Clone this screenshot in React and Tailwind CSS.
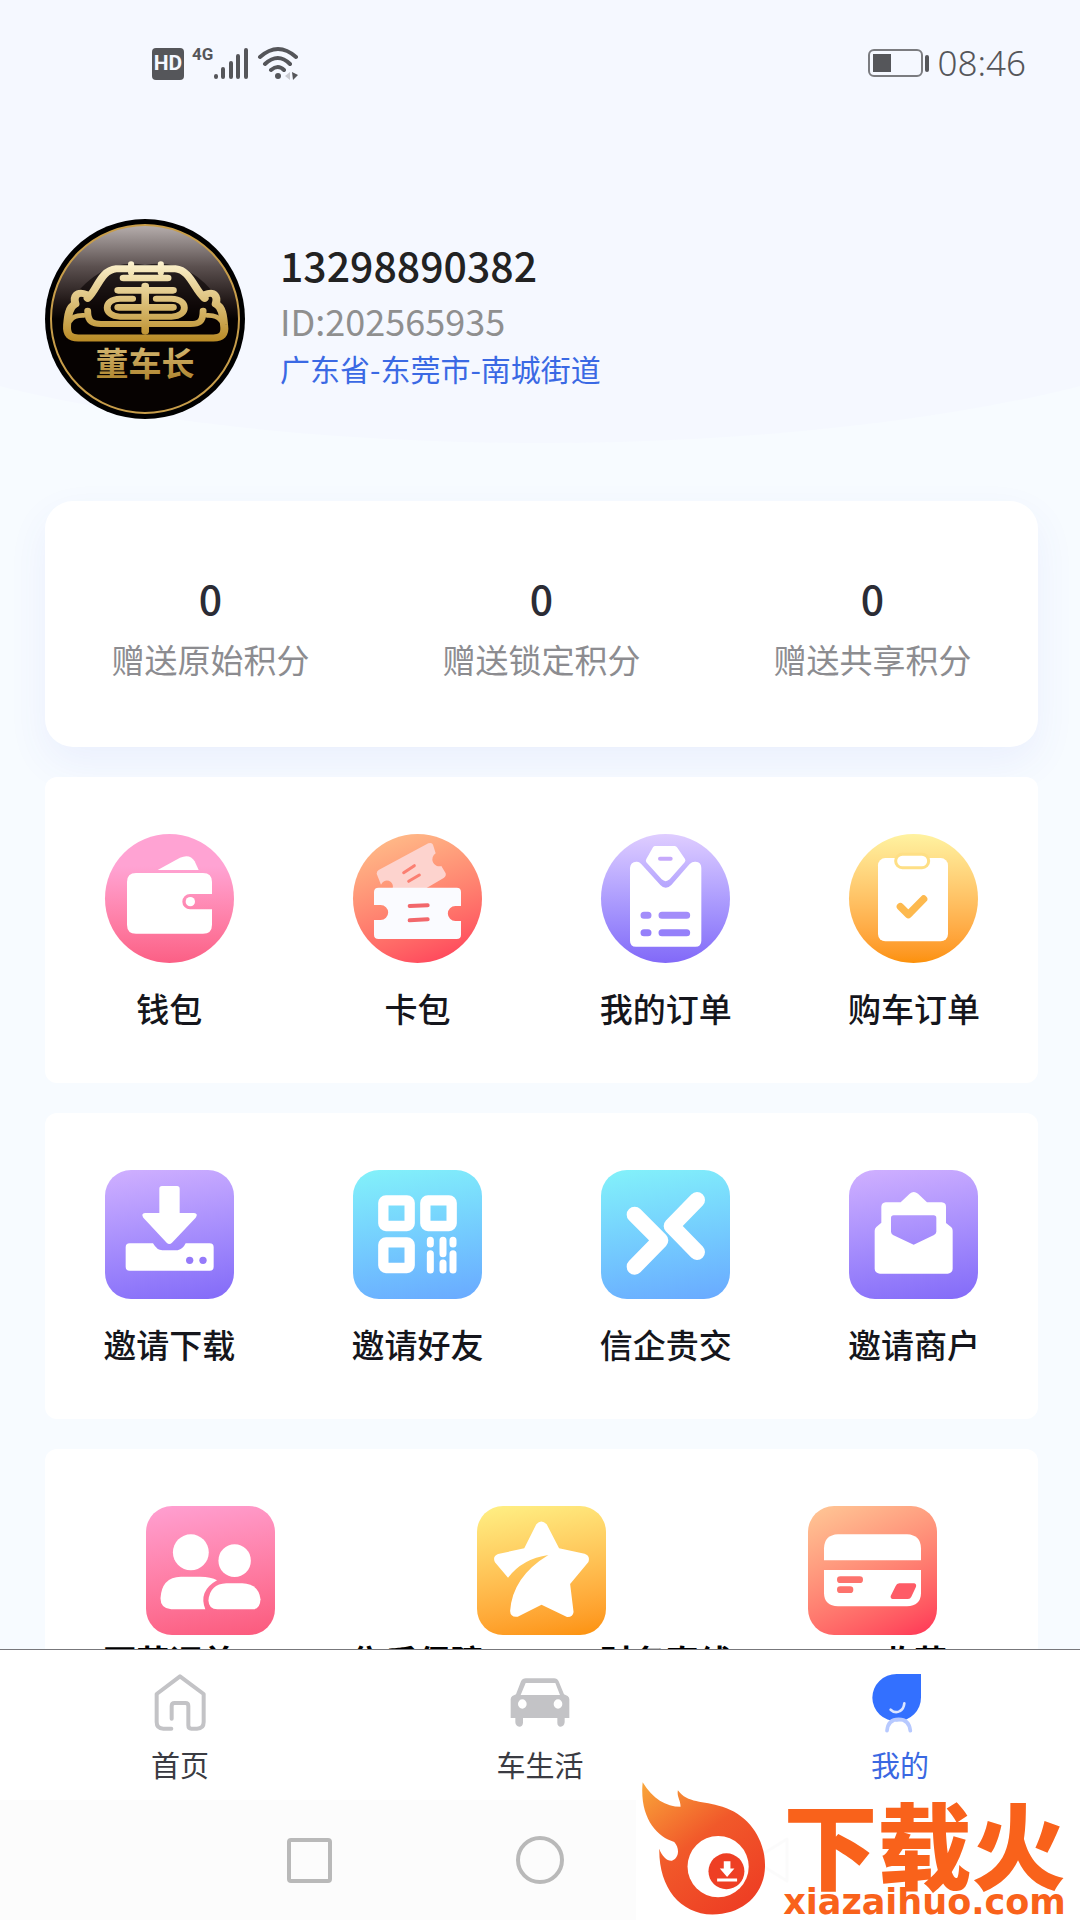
import { useState } from "react";

const WalletIcon = () => (
  <svg viewBox="75 72 387 387" className="size-full" fill="#fff">
    <path d="M233 180L300 143Q330 130 344 154L356 180Z" />
    <path d="M168 189H369Q396 189 396 216V252H330A22 22 0 0 0 330 298H396V344Q396 371 369 371H168Q141 371 141 344V216Q141 189 168 189Z" />
    <circle cx="331" cy="275" r="14" />
  </svg>
);

const CouponIcon = () => (
  <svg viewBox="813 72 387 387" className="size-full">
    <path
      d="M890 180L1039 100Q1050 96 1053 104L1061 130A21 21 0 0 0 1078 168L1091 190Q1093 199 1085 204L1030 236H932A18 18 0 0 0 897 224L884 191Q884 184 890 180Z"
      fill="#fdd3ce"
    />
    <path d="M965 188L997 167M980 214L1012 195" stroke="#fb7f72" strokeWidth="9" strokeLinecap="round" />
    <path
      d="M890 233H1124Q1137 233 1137 246V288H1120A22 22 0 0 0 1120 333H1137V374Q1137 387 1124 387H890Q876 387 876 374V330H896A22 22 0 0 0 896 285H876V246Q876 233 890 233Z"
      fill="#fafbff"
    />
    <path d="M983 288L1037 286M983 331L1037 328" stroke="#f2676b" strokeWidth="12" strokeLinecap="round" />
  </svg>
);

const OrderIcon = () => (
  <svg viewBox="120 72 387 387" className="size-full">
    <path d="M282 108H341Q346 108 349 113L372 147Q375 152 371 157L326 208Q314 219 302 208L256 157Q253 152 256 147L276 112Q279 108 282 108Z" fill="#fff" />
    <path d="M226 155Q234 154 240 161L298 225Q314 242 331 225L386 162Q394 154 404 155Q421 156 421 174V392Q421 410 403 410H225Q207 410 207 392V174Q208 156 226 155Z" fill="#fff" />
    <path d="M297 146H329" stroke="#c6a9fb" strokeWidth="12" strokeLinecap="round" />
    <path d="M249 316H261M303 316H377" stroke="#a38dfa" strokeWidth="21" strokeLinecap="round" />
    <path d="M249 368H261M303 368H377" stroke="#9580fa" strokeWidth="21" strokeLinecap="round" />
  </svg>
);

const CarOrderIcon = () => (
  <svg viewBox="867 72 387 387" className="size-full">
    <rect x="954" y="144" width="210" height="250" rx="22" fill="#fff" />
    <rect x="1007" y="133" width="99" height="40" rx="20" fill="#fff" stroke="#fedf85" strokeWidth="9" />
    <path d="M1021 290L1045 314L1091 267" fill="none" stroke="#fdb94e" strokeWidth="22" strokeLinecap="round" strokeLinejoin="round" />
  </svg>
);

const DownloadIcon = () => (
  <svg viewBox="75 60 387 387" className="size-full" fill="#fff">
    <path d="M246 108H291Q299 108 299 116V189H342Q356 191 347 203L276 278Q268 286 260 278L190 203Q182 191 195 189H238V116Q238 108 246 108Z" />
    <path d="M149 280H219Q231 301 247 301H293Q309 297 317 280H389Q401 280 401 292V350Q401 362 389 362H149Q137 362 137 350V292Q137 280 149 280Z" />
    <circle cx="329" cy="331" r="11" fill="#957afa" />
    <circle cx="369" cy="331" r="11" fill="#957afa" />
  </svg>
);

const QrIcon = () => (
  <svg viewBox="822 60 387 387" className="size-full" fill="none" stroke="#fff">
    <rect x="913" y="151" width="79" height="77" rx="8" strokeWidth="31" />
    <rect x="1039" y="151" width="79" height="77" rx="8" strokeWidth="31" />
    <rect x="913" y="277" width="79" height="77" rx="8" strokeWidth="31" />
    <path
      d="M1054 271V282M1054 311V360M1092 271V311M1092 339V360M1122 271V282M1122 311V360"
      strokeWidth="21"
      strokeLinecap="round"
    />
  </svg>
);

const ExchangeIcon = () => (
  <svg viewBox="120 60 387 387" className="size-full" fill="none" stroke="#fff" strokeWidth="48" strokeLinecap="round" strokeLinejoin="round">
    <path d="M221 194L298 271L221 350" />
    <path d="M408 150L332 228L408 306" />
  </svg>
);

const MerchantIcon = () => (
  <svg viewBox="867 60 387 387" className="size-full" fill="#fff">
    <path
      fillRule="evenodd"
      d="M1049 131Q1061 121 1074 131L1101 157H1145Q1158 158 1158 170V219L1174 232Q1178 236 1178 242V356Q1177 370 1163 371H960Q945 370 944 356V242Q944 236 949 231L964 218V170Q965 158 977 157H1022ZM1001 196Q993 196 993 204V245Q993 251 999 255L1061 284L1122 255Q1129 251 1129 245V204Q1129 196 1121 196Z"
    />
  </svg>
);

const FriendsIcon = () => (
  <svg viewBox="195 78 374 387" preserveAspectRatio="none" className="size-full" fill="#fff">
    <ellipse cx="325" cy="217" rx="52" ry="54" />
    <ellipse cx="452" cy="242" rx="47" ry="49" />
    <path d="M296 290H352Q384 290 401 301Q346 333 367 388H268Q237 386 237 355Q240 292 296 290Z" />
    <path d="M428 310H474Q522 312 527 358Q526 387 505 388H402Q377 387 376 362Q380 312 428 310Z" />
  </svg>
);

const StarIcon = () => (
  <svg viewBox="1153 78 374 387" preserveAspectRatio="none" className="size-full" fill="#fff">
    <path d="M1325 133Q1339 116 1355 133L1391 205L1465 221Q1482 227 1476 246L1423 312L1433 396Q1431 412 1414 411L1340 374L1271 410Q1250 413 1249 393Q1256 290 1360 225Q1285 236 1243 293L1205 247Q1197 229 1214 222L1290 205Z" />
  </svg>
);

const BankCardIcon = () => (
  <svg viewBox="750 78 387 387" className="size-full">
    <path d="M840 163H1047Q1088 165 1089 205V241H798V205Q799 165 840 163Z" fill="#fff" />
    <path d="M798 270H1089V340Q1088 378 1047 379H840Q799 378 798 340Z" fill="#fff" />
    <path d="M847 299H905M847 329H876" stroke="#fd736d" strokeWidth="20" strokeLinecap="round" />
    <path d="M1024 310H1069Q1076 312 1074 320L1060 350Q1057 357 1050 357H1004Q997 356 998 348L1013 318Q1016 311 1024 310Z" fill="#fe5b66" />
  </svg>
);

const Avatar = () => (
  <svg viewBox="0 0 200 200" className="size-[200px] shrink-0" role="img" aria-label="董车长">
    <defs>
      <linearGradient id="gloss" x1="0" y1="0" x2="0" y2="1">
        <stop offset="0" stopColor="#b7afae" />
        <stop offset=".22" stopColor="#5c5150" />
        <stop offset=".42" stopColor="#1d1413" />
        <stop offset=".5" stopColor="#060201" />
      </linearGradient>
      <linearGradient id="gold" gradientUnits="userSpaceOnUse" x1="0" y1="185" x2="0" y2="425">
        <stop offset="0" stopColor="#fdf3cf" />
        <stop offset=".5" stopColor="#dcc07a" />
        <stop offset="1" stopColor="#b98a24" />
      </linearGradient>
      <linearGradient id="goldText" x1="0" y1="0" x2="0" y2="1">
        <stop offset="0" stopColor="#dcc382" />
        <stop offset="1" stopColor="#a97c23" />
      </linearGradient>
    </defs>
    <circle cx="100" cy="100" r="100" fill="#000" />
    <circle cx="100" cy="100" r="94" fill="url(#gloss)" stroke="#c79d4a" strokeWidth="2" />
    <path d="M28 78Q60 38 100 46Q142 38 172 78L180 122H20Z" fill="#060201" opacity=".6" />
    <g transform="scale(.381 .3333) translate(-38 -57)" fill="none" stroke="url(#gold)" strokeLinecap="round" strokeLinejoin="round">
      <path d="M150 295C175 270 184 210 225 206H380C420 210 430 270 457 295" strokeWidth="21" />
      <path d="M264 192V218M342 192V218" strokeWidth="16" />
      <path d="M244 234H360M230 271H374M230 322H374" strokeWidth="20" />
      <path d="M268 296H235C190 296 190 350 235 350H370C415 350 415 296 370 296H330" strokeWidth="18" />
      <path d="M301 258V394" strokeWidth="20" />
      <path d="M150 332C150 368 165 372 185 372H420C440 372 453 368 453 332" strokeWidth="18" />
      <path d="M148 284C120 272 112 290 118 312C100 320 98 350 96 375C94 405 105 414 125 414H480C500 414 512 405 508 375C506 350 504 320 486 312C492 290 484 272 457 284" strokeWidth="21" />
      <path d="M140 346Q112 345 104 362M464 346Q490 345 500 362" strokeWidth="14" />
    </g>
    <text
      x="100"
      y="157"
      textAnchor="middle"
      fill="url(#goldText)"
      className="font-['Noto_Sans_CJK_SC',sans-serif] text-[33px] font-bold"
    >
      董车长
    </text>
  </svg>
);

const HomeIcon = () => (
  <svg viewBox="88 99 180 180" className="size-15" fill="none" stroke="currentColor" strokeWidth="12" strokeLinecap="round" strokeLinejoin="round">
    <path d="M152 266H128Q108 266 108 246V162L178 109L249 162V246Q249 266 229 266H212Q203 266 203 256V198Q203 189 194 189H162Q153 189 153 198V236" />
  </svg>
);

const CarIcon = () => (
  <svg viewBox="1172 99 180 180" className="size-15" fill="currentColor">
    <path
      fillRule="evenodd"
      d="M1220 115H1304Q1314 115 1318 124L1334 163L1345 168Q1350 172 1350 178V234H1336V247Q1334 260 1324 260Q1314 259 1314 248V234H1211V248Q1210 260 1200 260Q1189 259 1188 247V234H1174V178Q1174 172 1179 168L1190 163L1205 124Q1209 115 1220 115ZM1219 129L1204 165H1322L1308 129ZM1209 178A13 14 0 1 0 1209 206A13 14 0 1 0 1209 178ZM1316 178A13 14 0 1 0 1316 206A13 14 0 1 0 1316 178Z"
    />
  </svg>
);

const MineIcon = () => (
  <svg viewBox="750 99 180 180" className="size-15" fill="none" strokeLinecap="round">
    <path d="M903 102V172A73 71 0 1 1 830 102Z" fill="#3370ff" />
    <path d="M801 272Q804 238 836 238Q867 238 871 272" stroke="#b7c9ff" strokeWidth="11" />
    <path d="M812 209Q826 222 840 213Q851 207 853 190" stroke="#dbe5ff" strokeWidth="8" />
  </svg>
);

const stats = [
  { label: "赠送原始积分", value: 0 },
  { label: "赠送锁定积分", value: 0 },
  { label: "赠送共享积分", value: 0 },
];

const services = [
  { label: "钱包", Icon: WalletIcon, bg: "bg-linear-to-b from-[#ffa3d3] from-25% to-[#fb5f85]" },
  { label: "卡包", Icon: CouponIcon, bg: "bg-linear-160 from-[#ffc38c] to-[#ff3358]" },
  { label: "我的订单", Icon: OrderIcon, bg: "bg-linear-to-b from-[#dfcdff] to-[#8269f8]" },
  { label: "购车订单", Icon: CarOrderIcon, bg: "bg-linear-to-b from-[#fff2a0] to-[#fc9106]" },
];

const invites = [
  { label: "邀请下载", Icon: DownloadIcon, bg: "bg-linear-170 from-[#d0b0ff] to-[#836af8]" },
  { label: "邀请好友", Icon: QrIcon, bg: "bg-linear-170 from-[#83f2fa] to-[#69a9ff]" },
  { label: "信企贵交", Icon: ExchangeIcon, bg: "bg-linear-170 from-[#83f2fa] to-[#69a9ff]" },
  { label: "邀请商户", Icon: MerchantIcon, bg: "bg-linear-170 from-[#d0b0ff] to-[#836af8]" },
];

const more = [
  { name: "friends", Icon: FriendsIcon, bg: "bg-linear-170 from-[#ffa0d2] to-[#fb597c]" },
  { name: "star", Icon: StarIcon, bg: "bg-linear-170 from-[#fff084] to-[#fc9106]" },
  { name: "card", Icon: BankCardIcon, bg: "bg-linear-155 from-[#ffc896] to-[#ff3056]" },
];

const moreLabels = ["百获评首", "售后保障", "财务直线", "收获"];

const tabs = [
  { key: "home", label: "首页", Icon: HomeIcon },
  { key: "car", label: "车生活", Icon: CarIcon },
  { key: "mine", label: "我的", Icon: MineIcon },
];

function StatusBar() {
  return (
    <div className="flex h-[125px] items-center justify-between pr-[54px] pl-[152px] text-[#55565a]">
      <div className="flex items-end gap-2">
        <div className="flex h-8 w-8 items-center justify-center rounded-sm bg-[#55565a] font-[Roboto,sans-serif] text-[21px] font-bold text-[#f5f8ff]">
          HD
        </div>
        <div className="flex items-end">
          <span className="self-start font-[Roboto,sans-serif] text-[17px] leading-4 font-bold">4G</span>
          <svg viewBox="0 0 36 34" className="h-[34px] w-9" stroke="currentColor" strokeWidth="4" strokeLinecap="round">
            <path d="M3 30V31M10 23V31M18 17V31M25 10V31M33 4V31" />
          </svg>
        </div>
        <svg viewBox="0 0 42 34" className="h-[34px] w-[42px]" fill="none" stroke="currentColor" strokeWidth="4" strokeLinecap="round">
          <path d="M3 11Q21 -5 39 11M8 18Q21 6 33 18M14 24Q21 18 27 24" />
          <circle cx="21" cy="30" r="3" fill="currentColor" stroke="none" />
          <path d="M33 26V34L28 30Z" fill="#c9cad0" stroke="none" />
          <path d="M35 26L41 29L36 34Z" fill="currentColor" stroke="none" />
        </svg>
      </div>
      <div className="flex items-center gap-2">
        <svg viewBox="0 0 62 30" className="h-[30px] w-[62px]">
          <rect x="1" y="2" width="53" height="26" rx="5" fill="none" stroke="#7b7c80" strokeWidth="2" />
          <rect x="5" y="6" width="18" height="18" fill="currentColor" />
          <path d="M59 9V22" stroke="currentColor" strokeWidth="4" strokeLinecap="round" />
        </svg>
        <span className="font-['Noto_Sans',sans-serif] text-[35px] leading-10 font-light">08:46</span>
      </div>
    </div>
  );
}

function MenuCard({ items }) {
  return (
    <section className="grid grid-cols-4 rounded-xl bg-white pt-[57px] pb-[55px]">
      {items.map(({ label, Icon, bg }) => (
        <button key={label} type="button" className="flex flex-col items-center gap-[25px]">
          <span className={`size-[129px] ${items === services ? "rounded-full" : "rounded-[26px]"} ${bg}`}>
            <Icon />
          </span>
          <span className="text-[33px] leading-10 font-medium text-[#15161c]">{label}</span>
        </button>
      ))}
    </section>
  );
}

function Watermark() {
  return (
    <div className="absolute right-0 bottom-0 flex h-[140px] w-[444px] items-end bg-white/90 text-[#f9621b]">
      <svg viewBox="50 420 400 420" className="h-[140px] w-[133px] shrink-0">
        <defs>
          <linearGradient id="flame" x1="0" y1="0" x2=".7" y2="1">
            <stop offset="0" stopColor="#f9a63a" />
            <stop offset=".5" stopColor="#f1592a" />
            <stop offset="1" stopColor="#ee3f24" />
          </linearGradient>
        </defs>
        <path
          d="M70 426C100 475 140 500 184 500C184 480 172 470 176 450C205 490 250 480 310 500C390 525 440 600 438 680C436 765 370 824 280 824C180 822 118 740 120 626C128 650 145 664 158 662C180 655 182 625 165 606C110 590 60 530 70 426Z"
          fill="url(#flame)"
        />
        <ellipse cx="297" cy="680" rx="92" ry="92" fill="#fff" />
        <circle cx="322" cy="694" r="54" fill="#ee3f24" />
        <path d="M314 664H334V686H346L324 711L302 686H314ZM294 716H354V725H294Z" fill="#fff" />
      </svg>
      <div className="flex flex-1 flex-col items-center">
        <span className="text-[94px] leading-[84px] font-black">下载火</span>
        <span className="font-['DejaVu_Sans',sans-serif] text-[35px] leading-9 font-bold">xiazaihuo.com</span>
      </div>
    </div>
  );
}

export default function App() {
  const [active, setActive] = useState("mine");

  return (
    <div className="relative flex h-screen flex-col overflow-hidden bg-[#f7fbff] font-['Noto_Sans_CJK_SC',sans-serif]">
      <div className="absolute top-0 -left-1/4 h-[443px] w-[150%] rounded-b-[50%_223px] bg-[#f5f8ff]" />

      <main className="relative min-h-0 flex-1 overflow-hidden">
        <StatusBar />

        <header className="flex gap-[35px] px-[45px] pt-[94px]">
          <Avatar />
          <div className="pt-[17px]">
            <h1 className="text-[41px] leading-14 font-medium text-[#222]">13298890382</h1>
            <p className="text-[36px] leading-14 text-[#8f8f8f]">ID:202565935</p>
            <p className="text-[30px] leading-10 text-[#3a69e4]">广东省-东莞市-南城街道</p>
          </div>
        </header>

        <div className="mt-[82px] flex flex-col gap-[30px] pr-[42px] pl-[45px]">
          <section className="grid grid-cols-3 rounded-[28px] bg-white pt-[65px] pb-[57px] text-center shadow-[0_16px_40px_rgba(70,90,230,0.07)]">
            {stats.map((item) => (
              <div key={item.label}>
                <p className="text-[41px] leading-[62px] font-medium text-[#2b2c35]">{item.value}</p>
                <p className="text-[33px] leading-[62px] text-[#8c8c90]">{item.label}</p>
              </div>
            ))}
          </section>

          <MenuCard items={services} />
          <MenuCard items={invites} />

          <section className="rounded-xl bg-white pt-[57px] pb-[55px]">
            <div className="grid grid-cols-3 justify-items-center">
              {more.map(({ name, Icon, bg }) => (
                <button key={name} type="button" aria-label={name} className={`size-[129px] rounded-[26px] ${bg}`}>
                  <Icon />
                </button>
              ))}
            </div>
            <div className="mt-[5px] grid grid-cols-4 text-center text-[33px] leading-10 font-bold text-black">
              {moreLabels.map((label) => (
                <span key={label}>{label}</span>
              ))}
            </div>
          </section>
        </div>
      </main>

      <nav className="relative grid grid-cols-3 border-t border-[#77777b] bg-white pt-[23px] pb-4">
        {tabs.map(({ key, label, Icon }) => (
          <a
            key={key}
            href={`#${key}`}
            onClick={() => setActive(key)}
            className="flex flex-col items-center gap-[11px] text-[#c3c3c6]"
          >
            <Icon />
            <span className={`text-[29px] leading-10 ${active === key ? "text-[#3a68e2]" : "text-[#3a3b42]"}`}>
              {label}
            </span>
          </a>
        ))}
      </nav>

      {/* android buttons */}
      <div className="flex h-[120px] items-center justify-center gap-[183px] bg-[#fcfcfc]">
        <button type="button" aria-label="recent" className="flex size-12 items-center justify-center">
          <span className="size-[45px] rounded-sm border-4 border-[#b9b9b9]" />
        </button>
        <button type="button" aria-label="home" className="size-12 rounded-full border-4 border-[#b9b9b9]" />
        <button type="button" aria-label="back" className="size-12">
          <svg viewBox="0 0 48 48" className="size-full" fill="none" stroke="#d9d9d9" strokeWidth="3" strokeLinejoin="round">
            <path d="M40 3V45L6 24Z" />
          </svg>
        </button>
      </div>

      <Watermark />
    </div>
  );
}
